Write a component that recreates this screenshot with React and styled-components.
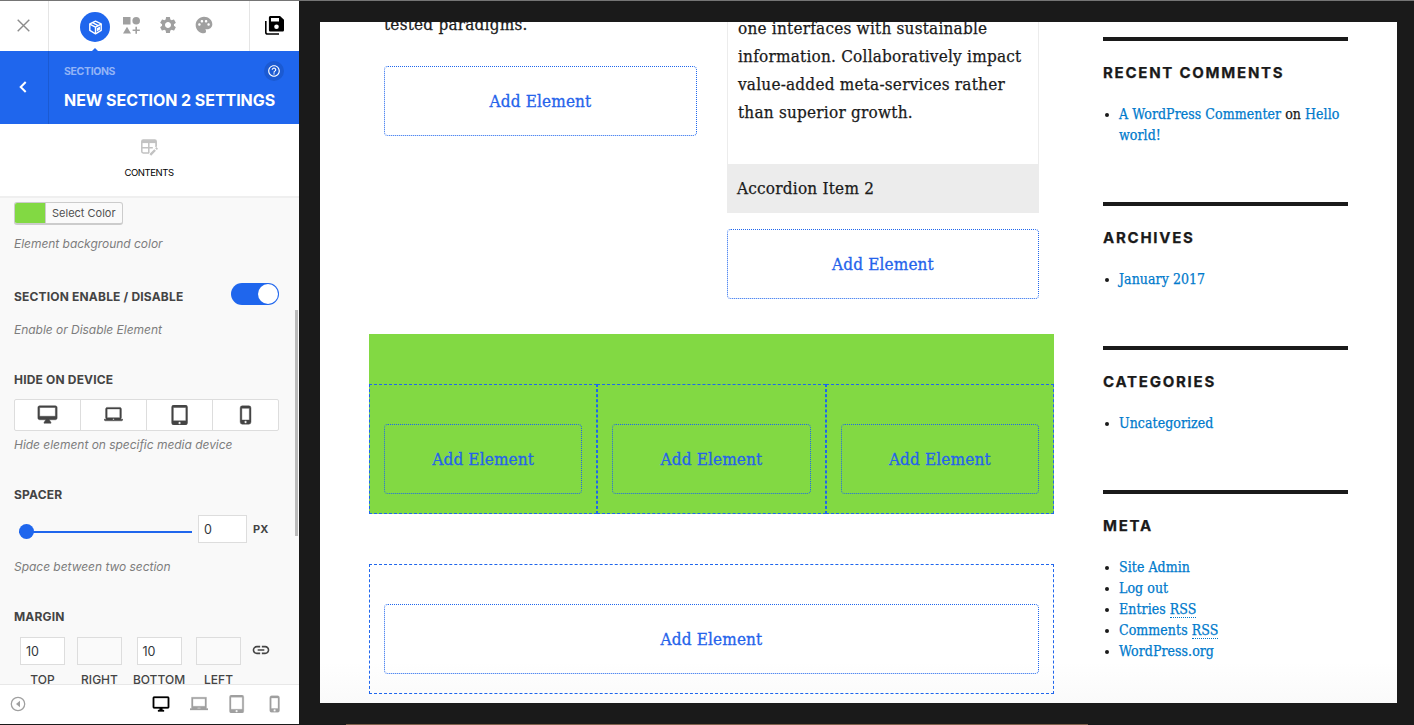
import React from "react";
import styled, { createGlobalStyle } from "styled-components";
import {
  MdSettings,
  MdPalette,
  MdHelpOutline,
  MdOutlineDesktopMac,
  MdLaptopMac,
  MdTabletMac,
  MdPhoneIphone,
  MdOutlineDesktopWindows,
  MdLaptopChromebook,
  MdLink,
} from "react-icons/md";

const blue = "#1f66ed";
const serif = `"DejaVu Serif Condensed", "DejaVu Serif", serif`;

const GlobalStyle = createGlobalStyle`
  * { box-sizing: border-box; }
  body { margin: 0; background: #1a1a1a; }
  svg { display: block; flex: none; }
`;

const Shell = styled.div`
  display: flex;
  width: 1414px;
  height: 725px;
  overflow: hidden;
  border-top: 1px solid #757575;
  background: #1a1a1a;
  font-family: Inter, sans-serif;
`;

/* ---------- builder panel ---------- */

const Panel = styled.aside`
  display: flex;
  flex-direction: column;
  width: 299px;
  height: 723px;
  background: #fff;
`;

const TopBar = styled.div`
  display: flex;
  height: 50px;
  flex: none;
`;

const TopEnd = styled.button`
  display: flex;
  align-items: center;
  justify-content: center;
  width: ${(p) => p.$width}px;
  padding: 0 1px 1px 0;
  border: 0;
  border-${(p) => p.$line}: 1px solid #e5e5e5;
  background: none;
`;

const Tools = styled.nav`
  display: flex;
  flex: 1;
  align-items: center;
  padding-left: 31px;
  color: #a0a0a0;
`;

const ActiveTool = styled.span`
  position: relative;
  display: flex;
  align-items: center;
  justify-content: center;
  width: 30px;
  height: 30px;
  margin: 2px 11.5px 0 0;
  border-radius: 50%;
  background: ${blue};
  &::after {
    content: "";
    position: absolute;
    left: 11px;
    top: 36px;
    border: 4px solid transparent;
    border-top: 0;
    border-bottom-color: ${blue};
  }
`;

const Tool = styled.span`
  display: flex;
  justify-content: center;
  width: 20px;
  margin: 0 ${(p) => p.$gap || 0}px 2px 0;
`;

const TitleBar = styled.header`
  display: flex;
  flex: none;
  height: 73px;
  background: ${blue};
  color: #fff;
`;

const Back = styled.button`
  display: flex;
  align-items: center;
  justify-content: center;
  width: 49px;
  padding: 0 2px 2px 0;
  border: 0;
  border-right: 1px solid #1b5ad2;
  background: none;
`;

const Heading = styled.div`
  flex: 1;
  padding: 10px 15px 0;
`;

const CrumbRow = styled.div`
  display: flex;
  justify-content: space-between;
  align-items: center;
  height: 20px;
`;

const Crumb = styled.span`
  font-size: 10.5px;
  font-weight: 700;
  letter-spacing: -0.35px;
  color: #93b4f6;
`;

const Help = styled.span`
  display: flex;
  align-items: center;
  justify-content: center;
  width: 20px;
  height: 20px;
  border-radius: 50%;
  background: #1b5ad2;
`;

const Title = styled.h1`
  margin: 9px 0 0;
  font-size: 16px;
  line-height: 20px;
  font-weight: 700;
  letter-spacing: -0.06px;
  white-space: nowrap;
`;

const ContentsTab = styled.div`
  display: flex;
  flex: none;
  flex-direction: column;
  align-items: center;
  height: 74px;
  padding: 15px 1px 0 0;
  border-bottom: 2px solid #efefef;
  font-size: 9.5px;
  line-height: 12px;
  letter-spacing: -0.42px;
  color: #000;
  svg { margin-bottom: 11px; }
`;

const Scroller = styled.div`
  display: flex;
  flex: 1;
  justify-content: space-between;
  min-height: 0;
  overflow: hidden;
  background: #f9f9f9;
`;

const Fields = styled.div`
  width: 265px;
  margin-left: 14px;
  padding-top: 4px;
`;

const Thumb = styled.div`
  width: 3px;
  height: 226px;
  margin: 112px 1px 0 0;
  background: #bbb;
`;

const Field = styled.section`
  height: ${(p) => p.$height}px;
`;

const FieldHead = styled.div`
  display: flex;
  justify-content: space-between;
  height: 20px;
`;

const Label = styled.h2`
  margin: 0;
  font-size: 12px;
  line-height: 20px;
  font-weight: 700;
  letter-spacing: 0.18px;
  color: #444;
  white-space: nowrap;
`;

const Hint = styled.p`
  margin: ${(p) => p.$top || 0}px 0 0;
  font-size: 12px;
  line-height: 20px;
  font-style: italic;
  letter-spacing: -0.03px;
  color: #7d7d7d;
  white-space: nowrap;
`;

const ColorButton = styled.button`
  display: flex;
  width: 109px;
  height: 23px;
  padding: 0;
  border: 1px solid #ccc;
  border-bottom-width: 2px;
  border-radius: 3px;
  background: #fafafa;
  font: 11px/21px Inter, sans-serif;
  color: #505050;
  overflow: hidden;
`;

const Swatch = styled.span`
  width: 31px;
  height: 20px;
  margin-right: 6px;
  border-right: 1px solid #ccc;
  background: #82d943;
`;

const Toggle = styled.span`
  display: flex;
  justify-content: flex-end;
  width: 48px;
  height: 22px;
  margin-top: -4px;
  padding: 1px;
  border-radius: 11px;
  background: ${blue};
`;

const Knob = styled.span`
  width: 20px;
  height: 20px;
  border-radius: 50%;
  background: #fff;
`;

const DeviceGroup = styled.div`
  display: grid;
  grid-template-columns: 65px 66px 66px 66px;
  height: 32px;
  margin-top: 9px;
  border: 1px solid #ddd;
  border-radius: 2px;
  background: #fff;
  color: #444;
`;

const Device = styled.span`
  display: flex;
  align-items: center;
  justify-content: center;
  padding-bottom: 1px;
  & + & { border-left: 1px solid #ddd; }
  path:not([fill="none"]) { stroke: currentColor; stroke-width: 0.5px; }
  path[fill="none"] { stroke: none; }
`;

const SliderRow = styled.div`
  display: flex;
  align-items: center;
  height: 28px;
  margin-top: 10px;
`;

const Slider = styled.div`
  display: flex;
  align-self: flex-start;
  width: 173px;
  height: 15px;
  margin: 9px 6px 0 5px;
  background: linear-gradient(${blue}, ${blue}) 0 7px / 100% 2px no-repeat;
`;

const Handle = styled.span`
  width: 15px;
  height: 15px;
  border-radius: 50%;
  background: ${blue};
`;

const NumberBox = styled.span`
  width: ${(p) => p.$width}px;
  height: 28px;
  padding-left: 5px;
  border: 1px solid #ddd;
  background: ${(p) => (p.$empty ? "#fafafa" : "#fff")};
  font-size: 12.5px;
  line-height: 27px;
  color: #32373c;
`;

const Unit = styled.span`
  margin-left: 6px;
  font-size: 11px;
  font-weight: 700;
  color: #444;
`;

const Margins = styled.div`
  display: flex;
  margin-top: 10px;
`;

const Side = styled.div`
  display: flex;
  flex-direction: column;
  align-items: center;
  width: ${(p) => p.$width}px;
  font-size: 12px;
  font-weight: 500;
  line-height: 20px;
  color: #444;
  ${NumberBox} { margin-bottom: 5px; font-weight: 400; }
`;

const LinkSides = styled.span`
  margin: 3px 0 0 4px;
  color: #444;
`;

const Footer = styled.footer`
  display: flex;
  flex: none;
  align-items: center;
  height: 40px;
  padding: 0 15px 1px 10px;
  border-top: 1px solid #e8e8e8;
  color: #a0a0a0;
`;

const Views = styled.div`
  display: flex;
  align-items: center;
  justify-content: space-between;
  width: 132px;
  margin-left: auto;
  path:not([fill="none"]) { stroke: currentColor; stroke-width: 0.4px; }
  path[fill="none"] { stroke: none; }
`;

const CurrentView = styled.span`
  color: #000;
`;

/* ---------- live preview ---------- */

const Stage = styled.main`
  display: flex;
  flex-direction: column;
  justify-content: space-between;
  flex: 1;
  padding: 21px 17px 0 21px;
`;

const Page = styled.div`
  display: flex;
  width: 1077px;
  height: 681px;
  padding-left: 49px;
  overflow: hidden;
  background: linear-gradient(to bottom, #fff 640px, #fafafa 681px);
  font-family: ${serif};
  color: #1a1a1a;
  -webkit-text-stroke-width: 0.25px;
`;

const DesktopEdge = styled.div`
  width: 742px;
  height: 1px;
  margin-left: 26px;
  background: #7d5f4c;
`;

const Content = styled.div`
  width: 685px;
`;

const Columns = styled.div`
  display: flex;
  height: 312px;
  padding: 0 15px;
  gap: 30px;
  font-size: 17px;
  line-height: 28px;
  letter-spacing: 0.22px;
`;

const Column = styled.div`
  width: ${(p) => p.$width}px;
`;

const ClosingLine = styled.p`
  margin: -12px 0 28px;
`;

const AddElement = styled.button`
  display: block;
  width: 100%;
  height: 70px;
  padding: 0;
  border: 1px dotted ${blue};
  border-radius: 4px;
  background: none;
  font: 17px/68px ${serif};
  letter-spacing: 0.15px;
  color: #2563eb;
  -webkit-text-stroke-width: 0.3px;
`;

const AccordionBody = styled.div`
  display: flow-root;
  height: 142px;
  padding-left: 10px;
  border: solid #ececec;
  border-width: 0 1px;
  white-space: nowrap;
  p { margin: -8px 0 0; }
`;

const AccordionHead = styled.div`
  height: 49px;
  margin-bottom: 16px;
  padding-left: 10px;
  background: #ececec;
  line-height: 49px;
`;

const GreenSection = styled.section`
  padding-top: 50px;
  background: #82d943;
`;

const Row = styled.section`
  display: flex;
  margin-top: ${(p) => p.$top || 0}px;
`;

const Cell = styled.div`
  flex: 1;
  height: 130px;
  padding: 39px 14px 0;
  border: 1px dashed ${blue};
`;

const Widgets = styled.aside`
  width: 245px;
  margin: 15px 0 0 49px;
`;

const Widget = styled.section`
  margin-bottom: 56px;
  border-top: 4px solid #1a1a1a;
  padding-top: 22px;
`;

const WidgetTitle = styled.h2`
  margin: 0 0 21px;
  font-family: Inter, sans-serif;
  font-size: 15px;
  line-height: 20px;
  font-weight: 700;
  letter-spacing: 1.75px;
`;

const LinkList = styled.ul`
  margin: 0;
  padding-left: 16px;
  font-size: 14px;
  line-height: 21px;
  letter-spacing: 0.06px;
  list-style: none;
  li::before {
    content: "";
    float: left;
    width: 4px;
    height: 4px;
    margin: 9px 0 0 -14px;
    border-radius: 50%;
    background: #1a1a1a;
  }
`;

const A = styled.a`
  color: #007acc;
`;

const Abbr = styled.abbr`
  border-bottom: 1px dotted #007acc;
  text-decoration: none;
`;

const CloseIcon = () => (
  <svg width="13" height="13" viewBox="0 0 13 13" stroke="#8c8c8c" strokeWidth="1.400">
    <path d="M.7.7l11.600 11.600M12.300.7L.7 12.300" />
  </svg>
);

const CubeIcon = () => (
  <svg width="15" height="15" viewBox="0 0 15 15" fill="none" stroke="#fff" strokeWidth="1.400" strokeLinejoin="round">
    <path d="M7.500 1.200l5.700 2.700v6.500l-5.700 3.400-5.700-3.400V3.900z" />
    <path d="M1.800 4.200l5.700 3 5.700-3M7.500 7.200v6.300M4.600 2.700l5.600 2.900" />
    <path d="M8.800 8.300l3.200-1.700v3l-3.200 1.900z" fill="#fff" stroke="none" />
  </svg>
);

const ShapesIcon = () => (
  <svg width="17" height="18" viewBox="0 0 17 18" fill="currentColor">
    <path d="M0 1h7.500v7.500H0zM4 10.800l4 6.700H0z" />
    <circle cx="13.200" cy="4.800" r="3.800" />
    <path d="M12.400 10.800H14v2.700h2.800v1.600H14v2.700h-1.600v-2.700H9.600v-1.600h2.800z" />
  </svg>
);

const SaveAllIcon = () => (
  <svg width="19" height="19" viewBox="0 0 19 19">
    <path d="M.8 5v11.200c0 1 .8 1.800 1.800 1.800H14" fill="none" stroke="#000" strokeWidth="1.600" />
    <path fill="#000" fillRule="evenodd" d="M5.500 0H15l4 3.700V14c0 .9-.7 1.600-1.600 1.600H5.500c-.9 0-1.600-.7-1.600-1.600V1.600C3.900.7 4.600 0 5.500 0zM6 2v3.600h8V2zM11.500 8.500a2.300 2.300 0 100 4.600 2.300 2.300 0 000-4.600z" />
  </svg>
);

const BackIcon = () => (
  <svg width="8" height="12" viewBox="0 0 8 12" fill="none" stroke="#fff" strokeWidth="2">
    <path d="M6.700 1L1.700 6l5 5" />
  </svg>
);

const TableEditIcon = () => (
  <svg width="17" height="17" viewBox="0 0 17 17" fill="none" stroke="#c2c2c2" strokeWidth="1.500">
    <path d="M8 14H2.200C1.400 14 .8 13.400.8 12.600V2.500C.8 1.700 1.400 1.100 2.200 1.100h11.600c.8 0 1.400.6 1.400 1.400V7M.8 8.800h11M7.800 4v10M15 4v4" />
    <path d="M1 2.600h14" strokeWidth="3" />
    <path d="M9.300 15.800l4.800-4.800M15 10.100l1.200-1.200" strokeWidth="2.400" />
  </svg>
);

const CollapseIcon = () => (
  <svg width="16" height="16" viewBox="0 0 16 16">
    <circle cx="8" cy="8" r="6.700" fill="none" stroke="currentColor" strokeWidth="1.300" />
    <path d="M10 4.800v6.400L6 8z" fill="currentColor" />
  </svg>
);

const sides = [
  { name: "TOP", value: "10", width: 57 },
  { name: "RIGHT", value: "", width: 57 },
  { name: "BOTTOM", value: "10", width: 62 },
  { name: "LEFT", value: "", width: 57 },
];

const deviceIcons = [
  [MdOutlineDesktopMac, 21],
  [MdLaptopMac, 19],
  [MdTabletMac, 20],
  [MdPhoneIphone, 20],
];

export default function App() {
  return (
    <>
      <GlobalStyle />
      <Shell>
        <Panel>
          <TopBar>
            <TopEnd $width={49} $line="right"><CloseIcon /></TopEnd>
            <Tools>
              <ActiveTool><CubeIcon /></ActiveTool>
              <Tool $gap={16}><ShapesIcon /></Tool>
              <Tool $gap={16}><MdSettings size={20} /></Tool>
              <Tool><MdPalette size={20} /></Tool>
            </Tools>
            <TopEnd $width={50} $line="left"><SaveAllIcon /></TopEnd>
          </TopBar>
          <TitleBar>
            <Back><BackIcon /></Back>
            <Heading>
              <CrumbRow>
                <Crumb>SECTIONS</Crumb>
                <Help><MdHelpOutline size={14} /></Help>
              </CrumbRow>
              <Title>NEW SECTION 2 SETTINGS</Title>
            </Heading>
          </TitleBar>
          <ContentsTab>
            <TableEditIcon />
            CONTENTS
          </ContentsTab>
          <Scroller>
            <Fields>
              <Field $height={85}>
                <ColorButton><Swatch />Select Color</ColorButton>
                <Hint $top={9}>Element background color</Hint>
              </Field>
              <Field $height={83}>
                <FieldHead>
                  <Label>SECTION ENABLE / DISABLE</Label>
                  <Toggle><Knob /></Toggle>
                </FieldHead>
                <Hint $top={13}>Enable or Disable Element</Hint>
              </Field>
              <Field $height={115}>
                <Label>HIDE ON DEVICE</Label>
                <DeviceGroup>
                  {deviceIcons.map(([Icon, size], i) => (
                    <Device key={i}><Icon size={size} /></Device>
                  ))}
                </DeviceGroup>
                <Hint $top={4}>Hide element on specific media device</Hint>
              </Field>
              <Field $height={122}>
                <Label>SPACER</Label>
                <SliderRow>
                  <Slider><Handle /></Slider>
                  <NumberBox $width={49}>0</NumberBox>
                  <Unit>PX</Unit>
                </SliderRow>
                <Hint $top={14}>Space between two section</Hint>
              </Field>
              <Field $height={90}>
                <Label>MARGIN</Label>
                <Margins>
                  {sides.map((s) => (
                    <Side key={s.name} $width={s.width}>
                      <NumberBox $width={45} $empty={!s.value}>{s.value}</NumberBox>
                      {s.name}
                    </Side>
                  ))}
                  <LinkSides><MdLink size={20} /></LinkSides>
                </Margins>
              </Field>
            </Fields>
            <Thumb />
          </Scroller>
          <Footer>
            <CollapseIcon />
            <Views>
              <CurrentView><MdOutlineDesktopWindows size={18} /></CurrentView>
              <MdLaptopChromebook size={18} />
              <MdTabletMac size={18} />
              <MdPhoneIphone size={18} />
            </Views>
          </Footer>
        </Panel>

        <Stage>
          <Page>
            <Content>
              <Columns>
                <Column $width={313}>
                  <ClosingLine>tested paradigms.</ClosingLine>
                  <AddElement>Add Element</AddElement>
                </Column>
                <Column $width={312}>
                  <AccordionBody>
                    <p>
                      one interfaces with sustainable<br />
                      information. Collaboratively impact<br />
                      value-added meta-services rather<br />
                      than superior growth.
                    </p>
                  </AccordionBody>
                  <AccordionHead>Accordion Item 2</AccordionHead>
                  <AddElement>Add Element</AddElement>
                </Column>
              </Columns>
              <GreenSection>
                <Row>
                  <Cell><AddElement>Add Element</AddElement></Cell>
                  <Cell><AddElement>Add Element</AddElement></Cell>
                  <Cell><AddElement>Add Element</AddElement></Cell>
                </Row>
              </GreenSection>
              <Row $top={50}>
                <Cell><AddElement>Add Element</AddElement></Cell>
              </Row>
            </Content>
            <Widgets>
              <Widget>
                <WidgetTitle>RECENT COMMENTS</WidgetTitle>
                <LinkList>
                  <li><A>A WordPress Commenter</A> on <A>Hello<br />world!</A></li>
                </LinkList>
              </Widget>
              <Widget>
                <WidgetTitle>ARCHIVES</WidgetTitle>
                <LinkList><li><A>January 2017</A></li></LinkList>
              </Widget>
              <Widget>
                <WidgetTitle>CATEGORIES</WidgetTitle>
                <LinkList><li><A>Uncategorized</A></li></LinkList>
              </Widget>
              <Widget>
                <WidgetTitle>META</WidgetTitle>
                <LinkList>
                  <li><A>Site Admin</A></li>
                  <li><A>Log out</A></li>
                  <li><A>Entries <Abbr>RSS</Abbr></A></li>
                  <li><A>Comments <Abbr>RSS</Abbr></A></li>
                  <li><A>WordPress.org</A></li>
                </LinkList>
              </Widget>
            </Widgets>
          </Page>
          <DesktopEdge />
        </Stage>
      </Shell>
    </>
  );
}
